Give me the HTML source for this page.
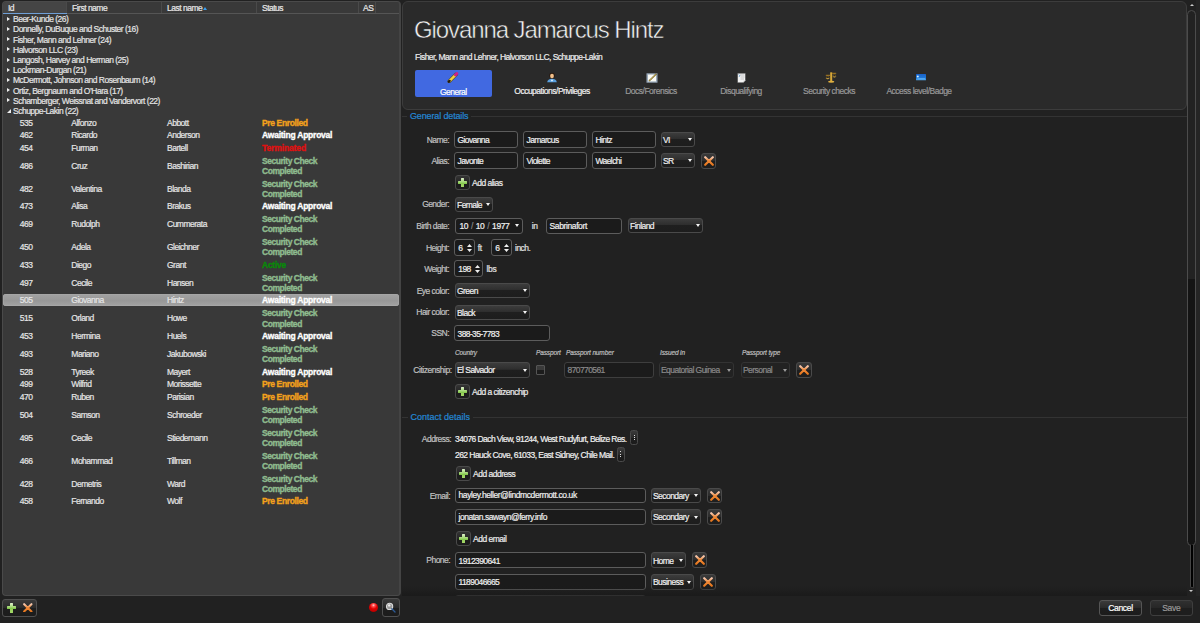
<!DOCTYPE html><html><head><meta charset="utf-8"><style>
*{margin:0;padding:0;box-sizing:border-box}
html,body{width:1200px;height:623px;overflow:hidden;background:#212121;-webkit-text-stroke:0.2px currentColor;font-family:"Liberation Sans",sans-serif;color:#e6e6e6}
.a{position:absolute}
.t8{font-size:8.5px;letter-spacing:-0.55px;white-space:nowrap}
#lp{left:2px;top:1px;width:399px;height:595px;background:#393939;border:1px solid #4a4a4a;border-right:2px solid #444;border-radius:4px;overflow:hidden}
.hd{position:absolute;top:0;height:11px;border-right:1px solid #4a4a4a;font-size:8.5px;line-height:12.2px;color:#e8e8e8;letter-spacing:-0.5px}
.hdl{position:absolute;left:0;top:11px;width:398px;height:1px;background:#555}
.g{position:absolute;left:10px;height:10.2px;font-size:8.5px;line-height:10.2px;color:#e4e4e4;letter-spacing:-0.5px;white-space:nowrap}
.tri{position:absolute;left:-6.2px;top:2.6px;width:0;height:0;border-top:2.75px solid transparent;border-bottom:2.75px solid transparent;border-left:3.5px solid #eee}
.r{position:absolute;left:0;width:398px;font-size:8.5px;color:#e6e6e6;letter-spacing:-0.5px;white-space:nowrap}
.r div{position:absolute;top:50%;transform:translateY(-50%);line-height:10.2px}
.c1{left:16.7px}.c2{left:68.3px}.c3{left:164px}.c4{left:259px;font-weight:bold;-webkit-text-stroke:0.35px currentColor}
.pe{color:#f4a21c;letter-spacing:-0.37px}.aa{color:#fff;letter-spacing:-0.23px}.te{color:#e01010;letter-spacing:-0.12px}.sc{color:#8fbc8f;letter-spacing:-0.45px}.ac{color:#088a08;letter-spacing:-0.25px}
.sel{background:linear-gradient(#a2a2a2,#9a9a9a 45%,#979797 55%,#a3a3a3);border-radius:3px;left:0;width:396px;box-shadow:inset 0 0 0 0.6px #aaa}
.btn{position:absolute;border:1px solid #505050;border-radius:3px;background:linear-gradient(#3a3a3a,#2a2a2a 50%,#1e1e1e 51%,#1c1c1c)}
#rh{left:402px;top:1px;width:785px;height:109px;background:#2a2a2a;border:1px solid #3c3c3c;border-radius:6px}
.tab{position:absolute;top:69px;height:28px;font-size:8.5px;text-align:center;color:#9a9a9a;letter-spacing:-0.5px;white-space:nowrap}
.tab .t{position:absolute;left:0;right:0;top:17px;line-height:10px}
.lbl{position:absolute;font-size:8.5px;line-height:10px;color:#c0c0c0;text-align:right;letter-spacing:-0.55px;white-space:nowrap}
.tb{position:absolute;height:17px;background:#1b1b1b;border:1px solid #5c5c5c;border-radius:3px;font-size:8.5px;line-height:15px;padding-left:2.5px;padding-top:0.8px;color:#f0f0f0;letter-spacing:-0.6px;white-space:nowrap}
.cb{position:absolute;height:15px;border:1px solid #4a4a4a;border-radius:3px;background:linear-gradient(#3c3c3c,#2e2e2e 45%,#1f1f1f 50%,#1d1d1d);font-size:8.5px;line-height:13px;padding-left:1px;padding-top:1px;color:#f0f0f0;letter-spacing:-0.55px;white-space:nowrap}
.arr{position:absolute;width:0;height:0;border-left:2.5px solid transparent;border-right:2.5px solid transparent;border-top:3px solid #f4f4f4}
.arru{position:absolute;width:0;height:0;border-left:2.5px solid transparent;border-right:2.5px solid transparent;border-bottom:2.8px solid #eee}
.arrd{position:absolute;width:0;height:0;border-left:2.5px solid transparent;border-right:2.5px solid transparent;border-top:2.8px solid #eee}
.xb{position:absolute;width:15px;height:16px;border:1px solid #4a4a4a;border-radius:3px;background:linear-gradient(#3a3a3a,#2c2c2c 50%,#1f1f1f 51%,#1e1e1e)}
.gt{position:absolute;font-size:9px;line-height:11px;color:#2489d6;letter-spacing:-0.14px;background:#212121;padding:0 3px;white-space:nowrap}
.gl{position:absolute;height:1px;background:#333}
.cap{position:absolute;font-size:6.5px;font-style:italic;color:#bdbdbd;letter-spacing:-0.12px;white-space:nowrap;line-height:8px}
</style></head><body>
<div id="lp" class="a">
<div class="a" style="left:0;top:0;width:63px;height:11px;background:#454545"></div>
<div class="hd" style="left:0px;width:64px;padding-left:5px">Id</div>
<div class="hd" style="left:64px;width:95px;padding-left:5px">First name</div>
<div class="hd" style="left:159px;width:95px;padding-left:5px">Last name</div>
<div class="hd" style="left:254px;width:102px;padding-left:5px">Status</div>
<div class="hd" style="left:356px;width:17px;padding-left:4px">AS</div>
<div class="hdl"></div>
<div class="a" style="left:0;top:11px;width:64px;height:1px;background:#6f9fd6"></div>
<div class="a" style="left:200px;top:4.5px;width:0;height:0;border-left:2.5px solid transparent;border-right:2.5px solid transparent;border-bottom:3px solid #3aa0f0"></div>
<div class="g" style="top:12.20px"><div class="tri"></div>Beer-Kunde (26)</div>
<div class="g" style="top:22.40px"><div class="tri"></div>Donnelly, DuBuque and Schuster (16)</div>
<div class="g" style="top:32.60px"><div class="tri"></div>Fisher, Mann and Lehner (24)</div>
<div class="g" style="top:42.80px"><div class="tri"></div>Halvorson LLC (23)</div>
<div class="g" style="top:53.00px"><div class="tri"></div>Langosh, Harvey and Herman (25)</div>
<div class="g" style="top:63.20px"><div class="tri"></div>Lockman-Durgan (21)</div>
<div class="g" style="top:73.40px"><div class="tri"></div>McDermott, Johnson and Rosenbaum (14)</div>
<div class="g" style="top:83.60px"><div class="tri"></div>Ortiz, Bergnaum and O&#8217;Hara (17)</div>
<div class="g" style="top:93.80px"><div class="tri"></div>Schamberger, Weissnat and Vandervort (22)</div>
<div class="g" style="top:104.00px"><div class="a" style="left:-6.5px;top:3px;width:0;height:0;border-left:4.5px solid transparent;border-bottom:4.5px solid #eee"></div>Schuppe-Lakin (22)</div>
<div class="r" style="top:114.20px;height:12.7px"><div class="c1">535</div><div class="c2">Alfonzo</div><div class="c3">Abbott</div><div class="c4 pe">Pre Enrolled</div></div>
<div class="r" style="top:126.90px;height:12.7px"><div class="c1">462</div><div class="c2">Ricardo</div><div class="c3">Anderson</div><div class="c4 aa">Awaiting Approval</div></div>
<div class="r" style="top:139.60px;height:12.7px"><div class="c1">454</div><div class="c2">Furman</div><div class="c3">Bartell</div><div class="c4 te">Terminated</div></div>
<div class="r" style="top:152.30px;height:22.9px"><div class="c1">486</div><div class="c2">Cruz</div><div class="c3">Bashirian</div><div class="c4 sc">Security Check<br>Completed</div></div>
<div class="r" style="top:175.20px;height:22.9px"><div class="c1">482</div><div class="c2">Valentina</div><div class="c3">Blanda</div><div class="c4 sc">Security Check<br>Completed</div></div>
<div class="r" style="top:198.10px;height:12.7px"><div class="c1">473</div><div class="c2">Alisa</div><div class="c3">Brakus</div><div class="c4 aa">Awaiting Approval</div></div>
<div class="r" style="top:210.80px;height:22.9px"><div class="c1">469</div><div class="c2">Rudolph</div><div class="c3">Cummerata</div><div class="c4 sc">Security Check<br>Completed</div></div>
<div class="r" style="top:233.70px;height:22.9px"><div class="c1">450</div><div class="c2">Adela</div><div class="c3">Gleichner</div><div class="c4 sc">Security Check<br>Completed</div></div>
<div class="r" style="top:256.60px;height:12.7px"><div class="c1">433</div><div class="c2">Diego</div><div class="c3">Grant</div><div class="c4 ac">Active</div></div>
<div class="r" style="top:269.30px;height:22.9px"><div class="c1">497</div><div class="c2">Cecile</div><div class="c3">Hansen</div><div class="c4 sc">Security Check<br>Completed</div></div>
<div class="r sel" style="top:292.20px;height:12.2px"><div class="c1">505</div><div class="c2">Giovanna</div><div class="c3">Hintz</div><div class="c4 aa">Awaiting Approval</div></div>
<div class="r" style="top:304.90px;height:22.9px"><div class="c1">515</div><div class="c2">Orland</div><div class="c3">Howe</div><div class="c4 sc">Security Check<br>Completed</div></div>
<div class="r" style="top:327.80px;height:12.7px"><div class="c1">453</div><div class="c2">Hermina</div><div class="c3">Huels</div><div class="c4 aa">Awaiting Approval</div></div>
<div class="r" style="top:340.50px;height:22.9px"><div class="c1">493</div><div class="c2">Mariano</div><div class="c3">Jakubowski</div><div class="c4 sc">Security Check<br>Completed</div></div>
<div class="r" style="top:363.40px;height:12.7px"><div class="c1">528</div><div class="c2">Tyreek</div><div class="c3">Mayert</div><div class="c4 aa">Awaiting Approval</div></div>
<div class="r" style="top:376.10px;height:12.7px"><div class="c1">499</div><div class="c2">Wilfrid</div><div class="c3">Morissette</div><div class="c4 pe">Pre Enrolled</div></div>
<div class="r" style="top:388.80px;height:12.7px"><div class="c1">470</div><div class="c2">Ruben</div><div class="c3">Parisian</div><div class="c4 pe">Pre Enrolled</div></div>
<div class="r" style="top:401.50px;height:22.9px"><div class="c1">504</div><div class="c2">Samson</div><div class="c3">Schroeder</div><div class="c4 sc">Security Check<br>Completed</div></div>
<div class="r" style="top:424.40px;height:22.9px"><div class="c1">495</div><div class="c2">Cecile</div><div class="c3">Stiedemann</div><div class="c4 sc">Security Check<br>Completed</div></div>
<div class="r" style="top:447.30px;height:22.9px"><div class="c1">466</div><div class="c2">Mohammad</div><div class="c3">Tillman</div><div class="c4 sc">Security Check<br>Completed</div></div>
<div class="r" style="top:470.20px;height:22.9px"><div class="c1">428</div><div class="c2">Demetris</div><div class="c3">Ward</div><div class="c4 sc">Security Check<br>Completed</div></div>
<div class="r" style="top:493.10px;height:12.7px"><div class="c1">458</div><div class="c2">Fernando</div><div class="c3">Wolf</div><div class="c4 pe">Pre Enrolled</div></div>
</div>
<svg width="0" height="0" style="position:absolute"><defs><linearGradient id="xg" x1="0" y1="0" x2="0" y2="1"><stop offset="0" stop-color="#f6c8b0"/><stop offset="0.45" stop-color="#f08a3a"/><stop offset="1" stop-color="#e8781e"/></linearGradient></defs></svg>
<div class="btn" style="left:2px;top:599px;width:35px;height:18px"></div>
<div class="a" style="left:6.7px;top:603px;width:9.5px;height:9.5px"><div class="a" style="left:3.25px;top:0;width:3px;height:9.5px;background:linear-gradient(#e6f5d6,#8ccd52 50%,#a6d86a);border-radius:0.5px"></div><div class="a" style="left:0;top:3.25px;width:9.5px;height:3px;background:linear-gradient(#b6e08e,#7cc442);border-radius:0.5px"></div></div>
<svg class="a" style="left:23px;top:602.8px" width="9.6" height="9.6" viewBox="0 0 10 10"><path d="M1.2 1.2 L8.8 8.8 M8.8 1.2 L1.2 8.8" stroke="url(#xg)" stroke-width="2.2" stroke-linecap="round"/></svg>
<div class="a" style="left:369px;top:603px;width:9px;height:9px;border-radius:50%;background:radial-gradient(circle at 50% 25%,#ffd0d0 0,#ff5050 18%,#e00000 45%,#c00000 75%,#600000 100%)"></div>
<div class="btn" style="left:382px;top:598px;width:18px;height:19px"></div>
<svg class="a" style="left:385px;top:602px" width="12" height="12" viewBox="0 0 12 12"><circle cx="4.6" cy="4.4" r="3.1" fill="#9a9a9a" stroke="#dcdcdc" stroke-width="1.1"/><circle cx="4.2" cy="3.4" r="1.2" fill="#eee"/><path d="M6.8 6.8 L10 10" stroke="#2c5c98" stroke-width="1.3" stroke-linecap="round"/></svg>
<div id="rh" class="a"></div>
<div class="a" style="left:414px;top:14.7px;font-size:24px;line-height:30px;color:#f4f4f4;letter-spacing:-1.1px;white-space:nowrap;-webkit-text-stroke:0.5px #2a2a2a">Giovanna Jamarcus Hintz</div>
<div class="a t8" style="left:415px;top:51.5px;line-height:10px;color:#ececec">Fisher, Mann and Lehner, Halvorson LLC, Schuppe-Lakin</div>
<div class="tab" style="left:415px;width:76.5px;background:#4169e1;border-radius:2px;top:69.7px;height:27px;color:#fff"><div class="t">General</div></div>
<div class="tab" style="left:505px;width:94px;color:#f0f0f0"><div class="t">Occupations/Privileges</div></div>
<div class="tab" style="left:610px;width:82px;color:#989898"><div class="t">Docs/Forensics</div></div>
<div class="tab" style="left:700px;width:82px;color:#989898"><div class="t">Disqualifying</div></div>
<div class="tab" style="left:788px;width:82px;color:#989898"><div class="t">Security checks</div></div>
<div class="tab" style="left:873px;width:92px;color:#989898"><div class="t">Access level/Badge</div></div>
<svg class="a" style="left:447px;top:72px" width="12" height="11" viewBox="0 0 12 11"><path d="M2.3 9.2 L9.2 2.3" stroke="#5a4a10" stroke-width="3.6" stroke-linecap="round"/><path d="M2.6 8.9 L8.6 2.9" stroke="#f0d040" stroke-width="2.6" stroke-linecap="butt"/><path d="M8.4 3.1 L9.9 1.6" stroke="#d0208a" stroke-width="2.8" stroke-linecap="round"/><path d="M1.6 9.9 L2.8 8.7" stroke="#201810" stroke-width="1.8" stroke-linecap="round"/></svg>
<svg class="a" style="left:546px;top:72px" width="12" height="11" viewBox="0 0 12 11"><circle cx="6" cy="3.6" r="2.8" fill="#2a1a10"/><ellipse cx="6" cy="4" rx="1.9" ry="2.2" fill="#f2c08a"/><path d="M1.2 10.2 Q1.6 6.9 6 6.7 Q10.4 6.9 10.8 10.2 Z" fill="#5aa0e0"/><circle cx="6" cy="8.4" r="0.9" fill="#e8f6ff"/></svg>
<svg class="a" style="left:645.5px;top:72.5px" width="12" height="10" viewBox="0 0 12 10"><rect x="0.5" y="0.3" width="11" height="9.4" fill="#9aaabb"/><rect x="2" y="1.6" width="8" height="6.8" fill="#fafaf4"/><path d="M3 8 L10.5 0.8" stroke="#6a5a20" stroke-width="1.4"/><path d="M3.3 7.7 L10.2 1.1" stroke="#e8d070" stroke-width="0.6"/></svg>
<svg class="a" style="left:736.5px;top:72.5px" width="9" height="10" viewBox="0 0 9 10"><path d="M0.5 0.3 H8.5 V7.3 L6.2 9.7 H0.5 Z" fill="#f2f2f2" stroke="#222" stroke-width="0.4"/><path d="M3 2h4.5M3.5 4h4M3.5 6h3.5" stroke="#909090" stroke-width="0.5"/><path d="M1.5 1.5 L3 2.8 L1.8 4" stroke="#6a9ac8" stroke-width="0.8" fill="none"/><path d="M6.2 9.7 L6.5 7.6 L8.5 7.3" fill="#d8d8d8"/></svg>
<svg class="a" style="left:825px;top:72px" width="12" height="11" viewBox="0 0 12 11"><rect x="5.2" y="0.3" width="2" height="9.5" fill="#d8a838"/><ellipse cx="6.2" cy="9.8" rx="3.2" ry="1" fill="#e0b040"/><path d="M0.8 3.3 H5.2 M7.2 1.3 H11.2" stroke="#c89020" stroke-width="0.8"/><path d="M0.8 6.2 Q2.8 8.2 4.6 6.2 Z" fill="#e8b840"/><path d="M7.6 4.4 Q9.4 6.4 11.2 4.4 Z" fill="#e8b840"/><path d="M2.7 3.3 L1 6.2 M2.7 3.3 L4.4 6.2 M9.4 1.3 L7.8 4.4 M9.4 1.3 L11 4.4" stroke="#b08020" stroke-width="0.4"/></svg>
<svg class="a" style="left:915.5px;top:73.8px" width="10" height="7" viewBox="0 0 10 7"><defs><linearGradient id="cg" x1="0" y1="0" x2="0" y2="1"><stop offset="0" stop-color="#1a60c8"/><stop offset="0.6" stop-color="#1e78d8"/><stop offset="1" stop-color="#50a8f0"/></linearGradient></defs><rect x="0" y="0" width="10" height="6.3" rx="0.6" fill="url(#cg)"/><circle cx="1.8" cy="2.5" r="1" fill="#d8f0ff"/><path d="M1.5 4.8 H9" stroke="#70c0ff" stroke-width="0.8"/></svg>
<div class="gl" style="left:402px;top:116px;width:785px"></div>
<div class="gt" style="left:407px;top:111px">General details</div>
<div class="lbl" style="right:751px;top:134.5px;">Name:</div>
<div class="tb" style="left:454px;top:131px;width:64px;height:17px;line-height:15px;">Giovanna</div>
<div class="tb" style="left:523px;top:131px;width:64px;height:17px;line-height:15px;">Jamarcus</div>
<div class="tb" style="left:592px;top:131px;width:64px;height:17px;line-height:15px;">Hintz</div>
<div class="cb" style="left:661px;top:132px;width:34px;height:15px;line-height:13px;">VI<div class="arr" style="right:2.5px;top:5.3px;border-top-color:#f4f4f4"></div></div>
<div class="lbl" style="right:751px;top:155.5px;">Alias:</div>
<div class="tb" style="left:454px;top:152px;width:64px;height:17px;line-height:15px;">Javonte</div>
<div class="tb" style="left:523px;top:152px;width:64px;height:17px;line-height:15px;">Violette</div>
<div class="tb" style="left:592px;top:152px;width:64px;height:17px;line-height:15px;">Waelchi</div>
<div class="cb" style="left:661px;top:153px;width:34px;height:15px;line-height:13px;">SR<div class="arr" style="right:2.5px;top:5.3px;border-top-color:#f4f4f4"></div></div>
<div class="xb" style="left:701px;top:153px;width:15px;height:16px"></div>
<svg class="a" style="left:703.5px;top:156.0px" width="10" height="10" viewBox="0 0 10 10"><path d="M1.2 1.2 L8.8 8.8 M8.8 1.2 L1.2 8.8" stroke="url(#xg)" stroke-width="2.2" stroke-linecap="round"/></svg>
<div class="btn" style="left:455px;top:175px;width:15px;height:15px;background:linear-gradient(#333,#262626 50%,#1c1c1c 51%,#1c1c1c);border-color:#4a4a4a"></div>
<div class="a" style="left:457.7px;top:177.7px;width:9.5px;height:9.5px"><div class="a" style="left:3.25px;top:0;width:3px;height:9.5px;background:linear-gradient(#e6f5d6,#8ccd52 50%,#a6d86a);border-radius:0.5px"></div><div class="a" style="left:0;top:3.25px;width:9.5px;height:3px;background:linear-gradient(#b6e08e,#7cc442);border-radius:0.5px"></div></div>
<div class="a" style="left:472px;top:177.5px;font-size:8.5px;line-height:10px;color:#ececec;letter-spacing:-0.5px;white-space:nowrap">Add alias</div>
<div class="lbl" style="right:751px;top:199.0px;">Gender:</div>
<div class="cb" style="left:455px;top:196.5px;width:38px;height:15px;line-height:13px;">Female<div class="arr" style="right:2.5px;top:5.3px;border-top-color:#f4f4f4"></div></div>
<div class="lbl" style="right:751px;top:221.0px;">Birth date:</div>
<div class="tb" style="left:454.5px;top:217.5px;width:68.5px;height:16px;line-height:14px;padding-left:4px;letter-spacing:-0.45px;word-spacing:1px">10&nbsp;<span style="color:#888">/</span>&nbsp;10&nbsp;<span style="color:#888">/</span>&nbsp;1977<div class="arr" style="right:3.5px;top:5.5px"></div></div>
<div class="a" style="left:531.7px;top:221.0px;font-size:8.5px;line-height:10px;color:#e0e0e0;letter-spacing:-0.3px;white-space:nowrap">in</div>
<div class="tb" style="left:546px;top:217.5px;width:76px;height:16px;line-height:14px;letter-spacing:-0.38px">Sabrinafort</div>
<div class="cb" style="left:628px;top:218px;width:75px;height:15px;line-height:13px;">Finland<div class="arr" style="right:2.5px;top:5.3px;border-top-color:#f4f4f4"></div></div>
<div class="lbl" style="right:751px;top:242.5px;">Height:</div>
<div class="tb" style="left:454.3px;top:239.3px;width:20.7px;height:16.5px;line-height:14.5px;padding-left:3px">6</div>
<svg class="a" style="left:467px;top:243.5px" width="5" height="8" viewBox="0 0 5 8"><path d="M0 3 L2.5 0 L5 3 Z M0 5 L5 5 L2.5 8 Z" fill="#eee"/></svg>
<div class="a" style="left:477.8px;top:242.5px;font-size:8.5px;line-height:10px;color:#e0e0e0;letter-spacing:-0.3px;white-space:nowrap">ft</div>
<div class="tb" style="left:491.2px;top:239.3px;width:20.8px;height:16.5px;line-height:14.5px;padding-left:3px">6</div>
<svg class="a" style="left:503.8px;top:243.5px" width="5" height="8" viewBox="0 0 5 8"><path d="M0 3 L2.5 0 L5 3 Z M0 5 L5 5 L2.5 8 Z" fill="#eee"/></svg>
<div class="a" style="left:515px;top:242.5px;font-size:8.5px;line-height:10px;color:#e0e0e0;letter-spacing:-0.5px;white-space:nowrap">inch.</div>
<div class="lbl" style="right:751px;top:264.0px;">Weight:</div>
<div class="tb" style="left:454.3px;top:260.4px;width:28.6px;height:16.5px;line-height:14.5px;padding-left:3px">198</div>
<svg class="a" style="left:475.3px;top:264.6px" width="5" height="8" viewBox="0 0 5 8"><path d="M0 3 L2.5 0 L5 3 Z M0 5 L5 5 L2.5 8 Z" fill="#eee"/></svg>
<div class="a" style="left:486.5px;top:263.8px;font-size:8.5px;line-height:10px;color:#e0e0e0;letter-spacing:-0.3px;white-space:nowrap">lbs</div>
<div class="lbl" style="right:751px;top:285.5px;">Eye color:</div>
<div class="cb" style="left:455px;top:283px;width:75px;height:15px;line-height:13px;">Green<div class="arr" style="right:2.5px;top:5.3px;border-top-color:#f4f4f4"></div></div>
<div class="lbl" style="right:751px;top:307.0px;">Hair color:</div>
<div class="cb" style="left:455px;top:304.5px;width:75px;height:15px;line-height:13px;">Black<div class="arr" style="right:2.5px;top:5.3px;border-top-color:#f4f4f4"></div></div>
<div class="lbl" style="right:751px;top:328.0px;">SSN:</div>
<div class="tb" style="left:454px;top:325px;width:96px;height:16px;line-height:14px;">388-35-7783</div>
<div class="cap" style="left:455px;top:349px">Country</div>
<div class="cap" style="left:536px;top:349px">Passport</div>
<div class="cap" style="left:566px;top:349px">Passport number</div>
<div class="cap" style="left:660px;top:349px">Issued in</div>
<div class="cap" style="left:742px;top:349px">Passport type</div>
<div class="lbl" style="right:748.3px;top:364.7px;letter-spacing:-0.46px;">Citizenship:</div>
<div class="cb" style="left:455px;top:362px;width:75px;height:15.5px;line-height:13.5px;">El Salvador<div class="arr" style="right:2.5px;top:5.5px;border-top-color:#f4f4f4"></div></div>
<div class="a" style="left:536px;top:365px;width:9px;height:10px;border:1px solid #555;border-radius:1px;background:linear-gradient(#3a3a3a,#3a3a3a 45%,#1c1c1c 50%)"></div>
<div class="tb" style="left:564px;top:361.5px;width:90px;height:16.5px;line-height:14.5px;color:#8a8a8a;border-color:#3e3e3e">870770561</div>
<div class="cb" style="left:659px;top:362px;width:75px;height:15.5px;line-height:13.5px;color:#8a8a8a;border-color:#333;background:#222">Equatorial Guinea<div class="arr" style="right:2.5px;top:5.5px;border-top-color:#999"></div></div>
<div class="cb" style="left:741px;top:362px;width:49px;height:15.5px;line-height:13.5px;color:#8a8a8a;border-color:#333;background:#222">Personal<div class="arr" style="right:2.5px;top:5.5px;border-top-color:#999"></div></div>
<div class="xb" style="left:796px;top:362px;width:16px;height:16px"></div>
<svg class="a" style="left:799.0px;top:365.0px" width="10" height="10" viewBox="0 0 10 10"><path d="M1.2 1.2 L8.8 8.8 M8.8 1.2 L1.2 8.8" stroke="url(#xg)" stroke-width="2.2" stroke-linecap="round"/></svg>
<div class="btn" style="left:455px;top:384px;width:15px;height:15px;background:linear-gradient(#333,#262626 50%,#1c1c1c 51%,#1c1c1c);border-color:#4a4a4a"></div>
<div class="a" style="left:457.7px;top:386.7px;width:9.5px;height:9.5px"><div class="a" style="left:3.25px;top:0;width:3px;height:9.5px;background:linear-gradient(#e6f5d6,#8ccd52 50%,#a6d86a);border-radius:0.5px"></div><div class="a" style="left:0;top:3.25px;width:9.5px;height:3px;background:linear-gradient(#b6e08e,#7cc442);border-radius:0.5px"></div></div>
<div class="a" style="left:472px;top:386.5px;font-size:8.5px;line-height:10px;color:#ececec;letter-spacing:-0.5px;white-space:nowrap">Add a citizenchip</div>
<div class="gl" style="left:402px;top:417.2px;width:785px"></div>
<div class="gt" style="left:407.5px;top:412.3px;letter-spacing:0">Contact details</div>
<div class="lbl" style="right:749px;top:433.5px;">Address:</div>
<div class="a" style="left:455px;top:433.5px;font-size:8.5px;line-height:10px;color:#f0f0f0;letter-spacing:-0.58px;white-space:nowrap">34076 Dach View, 91244, West Rudyfurt, Belize Res.</div>
<div class="a" style="left:455px;top:450.0px;font-size:8.5px;line-height:10px;color:#f0f0f0;letter-spacing:-0.55px;white-space:nowrap">262 Hauck Cove, 61033, East Sidney, Chile Mail.</div>
<div class="btn" style="left:630.3px;top:430px;width:7.7px;height:15.3px;border-color:#4a4a4a;border-radius:2.5px"></div>
<div class="a" style="left:633.65px;top:434.6px;width:1px;height:1px;background:#ddd"></div>
<div class="a" style="left:633.65px;top:436.9px;width:1px;height:1px;background:#ddd"></div>
<div class="a" style="left:633.65px;top:439.2px;width:1px;height:1px;background:#ddd"></div>
<div class="btn" style="left:616.7px;top:446.7px;width:8px;height:15px;border-color:#4a4a4a;border-radius:2.5px"></div>
<div class="a" style="left:620.2px;top:451.2px;width:1px;height:1px;background:#ddd"></div>
<div class="a" style="left:620.2px;top:453.5px;width:1px;height:1px;background:#ddd"></div>
<div class="a" style="left:620.2px;top:455.8px;width:1px;height:1px;background:#ddd"></div>
<div class="btn" style="left:456px;top:466px;width:15px;height:15px;background:linear-gradient(#333,#262626 50%,#1c1c1c 51%,#1c1c1c);border-color:#4a4a4a"></div>
<div class="a" style="left:458.7px;top:468.7px;width:9.5px;height:9.5px"><div class="a" style="left:3.25px;top:0;width:3px;height:9.5px;background:linear-gradient(#e6f5d6,#8ccd52 50%,#a6d86a);border-radius:0.5px"></div><div class="a" style="left:0;top:3.25px;width:9.5px;height:3px;background:linear-gradient(#b6e08e,#7cc442);border-radius:0.5px"></div></div>
<div class="a" style="left:473px;top:468.5px;font-size:8.5px;line-height:10px;color:#ececec;letter-spacing:-0.5px;white-space:nowrap">Add address</div>
<div class="lbl" style="right:750px;top:490.5px;">Email:</div>
<div class="tb" style="left:455px;top:487.5px;width:191px;height:15px;line-height:13px;letter-spacing:-0.41px">hayley.heller@lindmcdermott.co.uk</div>
<div class="cb" style="left:651px;top:488px;width:50px;height:15px;line-height:13px;">Secondary<div class="arr" style="right:2.5px;top:5.3px;border-top-color:#f4f4f4"></div></div>
<div class="xb" style="left:707px;top:488px;width:15px;height:15px"></div>
<svg class="a" style="left:709.5px;top:490.5px" width="10" height="10" viewBox="0 0 10 10"><path d="M1.2 1.2 L8.8 8.8 M8.8 1.2 L1.2 8.8" stroke="url(#xg)" stroke-width="2.2" stroke-linecap="round"/></svg>
<div class="tb" style="left:455px;top:509.2px;width:191px;height:15.5px;line-height:13.5px;letter-spacing:-0.47px">jonatan.sawayn@ferry.info</div>
<div class="cb" style="left:651px;top:509px;width:50px;height:15.5px;line-height:13.5px;">Secondary<div class="arr" style="right:2.5px;top:5.5px;border-top-color:#f4f4f4"></div></div>
<div class="xb" style="left:707px;top:509px;width:15px;height:15.5px"></div>
<svg class="a" style="left:709.5px;top:511.75px" width="10" height="10" viewBox="0 0 10 10"><path d="M1.2 1.2 L8.8 8.8 M8.8 1.2 L1.2 8.8" stroke="url(#xg)" stroke-width="2.2" stroke-linecap="round"/></svg>
<div class="btn" style="left:456px;top:531px;width:15px;height:15px;background:linear-gradient(#333,#262626 50%,#1c1c1c 51%,#1c1c1c);border-color:#4a4a4a"></div>
<div class="a" style="left:458.7px;top:533.7px;width:9.5px;height:9.5px"><div class="a" style="left:3.25px;top:0;width:3px;height:9.5px;background:linear-gradient(#e6f5d6,#8ccd52 50%,#a6d86a);border-radius:0.5px"></div><div class="a" style="left:0;top:3.25px;width:9.5px;height:3px;background:linear-gradient(#b6e08e,#7cc442);border-radius:0.5px"></div></div>
<div class="a" style="left:473px;top:533.5px;font-size:8.5px;line-height:10px;color:#ececec;letter-spacing:-0.5px;white-space:nowrap">Add email</div>
<div class="lbl" style="right:750px;top:555.0px;">Phone:</div>
<div class="tb" style="left:455px;top:552px;width:191px;height:16px;line-height:14px;">1912390641</div>
<div class="cb" style="left:651px;top:552px;width:35px;height:16px;line-height:14px;">Home<div class="arr" style="right:2.5px;top:5.8px;border-top-color:#f4f4f4"></div></div>
<div class="xb" style="left:692px;top:552px;width:15px;height:16px"></div>
<svg class="a" style="left:694.5px;top:555.0px" width="10" height="10" viewBox="0 0 10 10"><path d="M1.2 1.2 L8.8 8.8 M8.8 1.2 L1.2 8.8" stroke="url(#xg)" stroke-width="2.2" stroke-linecap="round"/></svg>
<div class="tb" style="left:455px;top:574px;width:191px;height:15.5px;line-height:13.5px;">1189046665</div>
<div class="cb" style="left:651px;top:574px;width:43px;height:15.5px;line-height:13.5px;">Business<div class="arr" style="right:2.5px;top:5.5px;border-top-color:#f4f4f4"></div></div>
<div class="xb" style="left:700px;top:574px;width:16px;height:15.5px"></div>
<svg class="a" style="left:703.0px;top:576.75px" width="10" height="10" viewBox="0 0 10 10"><path d="M1.2 1.2 L8.8 8.8 M8.8 1.2 L1.2 8.8" stroke="url(#xg)" stroke-width="2.2" stroke-linecap="round"/></svg>
<div class="tb" style="left:455px;top:595px;width:191px;height:16px;line-height:14px;"></div>
<div class="cb" style="left:651px;top:595.5px;width:43px;height:16px;line-height:14px;"><div class="arr" style="right:2.5px;top:5.8px;border-top-color:#f4f4f4"></div></div>
<div class="xb" style="left:700px;top:595.5px;width:16px;height:16px"></div>
<div class="a" style="left:402px;top:586px;width:785px;height:10px;background:linear-gradient(rgba(24,24,24,0),rgba(24,24,24,0.7))"></div>
<div class="a" style="left:402px;top:596.4px;width:798px;height:27px;background:#212121"></div>
<div class="btn" style="left:1099px;top:600px;width:43px;height:15.6px;border-color:#555;font-size:8.5px;line-height:15.4px;text-align:center;color:#fff;letter-spacing:-0.3px">Cancel</div>
<div class="btn" style="left:1150px;top:600px;width:42.5px;height:15.6px;border-color:#3e3e3e;font-size:8.5px;line-height:15.4px;text-align:center;color:#9a9a9a;letter-spacing:-0.3px;background:linear-gradient(#303030,#262626 50%,#1e1e1e 51%)">Save</div>
<div class="a" style="left:1196px;top:0;width:4px;height:596px;background:#252525"></div>
<div class="a" style="left:1189.5px;top:3.8px;width:0;height:0;border-left:2.5px solid transparent;border-right:2.5px solid transparent;border-bottom:2.6px solid #ccc"></div>
<div class="a" style="left:1187px;top:9.5px;width:9px;height:536px;border:1px solid #4c4c4c;border-radius:4.5px;background:linear-gradient(#222 0,#222 268px,#141414 268px)"></div>
<div class="a" style="left:1190px;top:544.5px;width:4.2px;height:43px;border:1px solid #444;border-top:none;border-radius:0 0 2px 2px;background:#000"></div>
<div class="a" style="left:1189px;top:590.1px;width:0;height:0;border-left:2.8px solid transparent;border-right:2.8px solid transparent;border-top:2.8px solid #ccc"></div>
</body></html>
